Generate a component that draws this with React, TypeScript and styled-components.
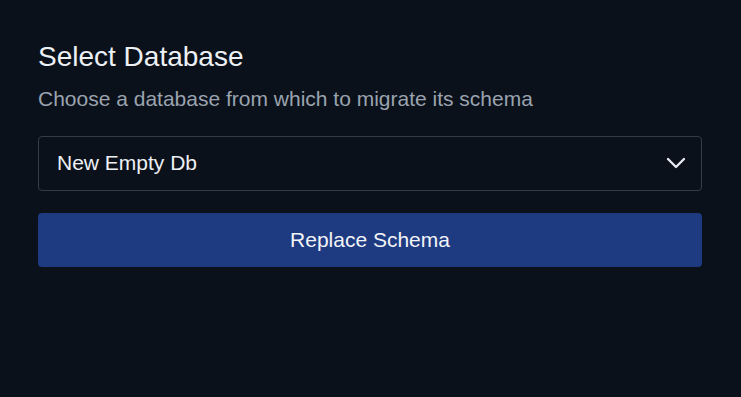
import React, { useState } from "react";
import styled, { createGlobalStyle } from "styled-components";

const GlobalStyle = createGlobalStyle`
    html, body {
        margin: 0;
        padding: 0;
        background-color: #0b111a;
        font-family: "Liberation Sans", Arial, sans-serif;
    }
`;

const DATABASES = ["New Empty Db", "Production", "Staging"];

const Chevron: React.FC = () => (
    <svg width="20" height="12" viewBox="0 0 20 12" fill="none" stroke="#e8ecf2" strokeWidth="2.3" strokeLinecap="round" strokeLinejoin="round">
        <polyline points="2 2 10 10 18 2" />
    </svg>
);

const App: React.FC = () => {
    const [selected] = useState(DATABASES[0]);

    return (
        <>
            <GlobalStyle />
            <Page>
                <Header>
                    <h1>Select Database</h1>
                    <p>Choose a database from which to migrate its schema</p>
                </Header>
                <Form>
                    <SelectBox>
                        <span>{selected}</span>
                        <Chevron />
                    </SelectBox>
                    <Button>Replace Schema</Button>
                </Form>
            </Page>
        </>
    );
};

const Page = styled.div`
    padding: 40px 39px 38px 38px;
    min-height: 397px;
    box-sizing: border-box;
`;

const Header = styled.div`
    display: flex;
    flex-direction: column;
    gap: 11px;

    h1 {
        margin: 0;
        font-size: 28px;
        line-height: 1.2;
        font-weight: 400;
        color: #edf0f5;
    }

    p {
        margin: 0;
        font-size: 21px;
        line-height: 1.3;
        color: #9aa3af;
    }
`;

const Form = styled.div`
    display: flex;
    flex-direction: column;
    gap: 22px;
    margin-top: 24px;
`;

const SelectBox = styled.div`
    height: 55px;
    box-sizing: border-box;
    display: flex;
    align-items: center;
    justify-content: space-between;
    padding: 0 15px 0 18px;
    border: 1px solid #353c47;
    border-radius: 4px;
    font-size: 21px;
    color: #edf0f5;
    cursor: pointer;
`;

const Button = styled.button`
    height: 54px;
    border: none;
    border-radius: 4px;
    background-color: #1e3a80;
    color: #f2f4f8;
    font-family: inherit;
    font-size: 21px;
    cursor: pointer;
`;

export default App;
